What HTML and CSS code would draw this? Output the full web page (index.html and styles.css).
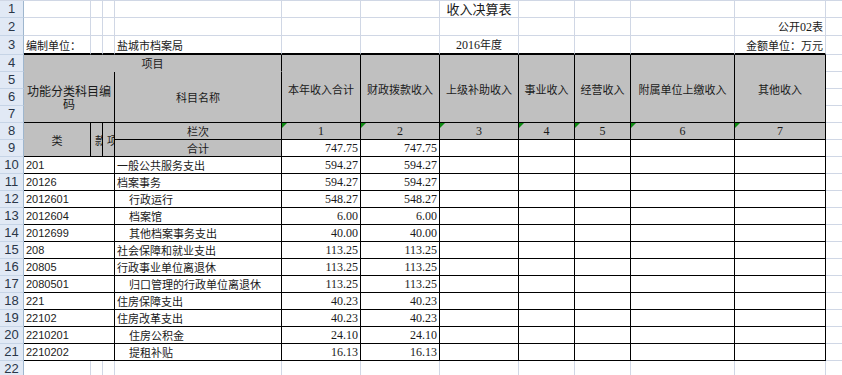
FILE: index.html
```html
<!DOCTYPE html>
<html lang="zh-CN">
<head>
<meta charset="utf-8">
<title>收入决算表</title>
<link rel="stylesheet" href="styles.css">
</head>
<body>
<table class="sheet">
  <colgroup>
    <col class="c-rh"><col class="c-a"><col class="c-b"><col class="c-c"><col class="c-d">
    <col class="c-e"><col class="c-f"><col class="c-g"><col class="c-h"><col class="c-i">
    <col class="c-j"><col class="c-k"><col class="c-l">
  </colgroup>
  <tbody>
    <tr>
      <th class="rh">1</th>
      <td></td><td></td><td></td><td></td><td></td><td></td>
      <td class="title">收入决算表</td>
      <td></td><td></td><td></td><td></td><td></td>
    </tr>
    <tr>
      <th class="rh">2</th>
      <td></td><td></td><td></td><td></td><td></td><td></td><td></td><td></td><td></td><td></td>
      <td class="right">公开<span class="dg">02</span>表</td>
      <td></td>
    </tr>
    <tr class="r3">
      <th class="rh">3</th>
      <td class="thick">编制单位：</td>
      <td class="thick"></td><td class="thick"></td>
      <td class="thick">盐城市档案局</td>
      <td class="thick"></td><td class="thick"></td>
      <td class="thick center"><span class="dg">2016</span>年度</td>
      <td class="thick"></td><td class="thick"></td><td class="thick"></td>
      <td class="thick right">金额单位：万元</td>
      <td></td>
    </tr>
    <tr>
      <th class="rh">4</th>
      <td class="hd xm" colspan="4">项目</td>
      <td class="hd" rowspan="4">本年收入合计</td>
      <td class="hd" rowspan="4">财政拨款收入</td>
      <td class="hd" rowspan="4">上级补助收入</td>
      <td class="hd" rowspan="4">事业收入</td>
      <td class="hd" rowspan="4">经营收入</td>
      <td class="hd" rowspan="4">附属单位上缴收入</td>
      <td class="hd" rowspan="4">其他收入</td>
      <td></td>
    </tr>
    <tr>
      <th class="rh">5</th>
      <td class="hd wrap" colspan="3" rowspan="3">功能分类科目编码</td>
      <td class="hd" rowspan="3">科目名称</td>
      <td></td>
    </tr>
    <tr><th class="rh">6</th><td></td></tr>
    <tr><th class="rh">7</th><td></td></tr>
    <tr>
      <th class="rh">8</th>
      <td class="hd" rowspan="2">类</td>
      <td class="hd clip" rowspan="2">款</td>
      <td class="hd clip" rowspan="2">项</td>
      <td class="hd">栏次</td>
      <td class="hd tri dg">1</td>
      <td class="hd tri dg">2</td>
      <td class="hd tri dg">3</td>
      <td class="hd tri dg">4</td>
      <td class="hd tri dg">5</td>
      <td class="hd tri dg">6</td>
      <td class="hd tri dg">7</td>
      <td></td>
    </tr>
    <tr>
      <th class="rh">9</th>
      <td class="hd">合计</td>
      <td class="b num">747.75</td><td class="b num">747.75</td>
      <td class="b"></td><td class="b"></td><td class="b"></td><td class="b"></td><td class="b"></td>
      <td></td>
    </tr>
    <tr>
      <th class="rh">10</th>
      <td class="b code" colspan="3">201</td><td class="b">一般公共服务支出</td>
      <td class="b num">594.27</td><td class="b num">594.27</td>
      <td class="b"></td><td class="b"></td><td class="b"></td><td class="b"></td><td class="b"></td><td></td>
    </tr>
    <tr>
      <th class="rh">11</th>
      <td class="b code" colspan="3">20126</td><td class="b">档案事务</td>
      <td class="b num">594.27</td><td class="b num">594.27</td>
      <td class="b"></td><td class="b"></td><td class="b"></td><td class="b"></td><td class="b"></td><td></td>
    </tr>
    <tr>
      <th class="rh">12</th>
      <td class="b code" colspan="3">2012601</td><td class="b ind">行政运行</td>
      <td class="b num">548.27</td><td class="b num">548.27</td>
      <td class="b"></td><td class="b"></td><td class="b"></td><td class="b"></td><td class="b"></td><td></td>
    </tr>
    <tr>
      <th class="rh">13</th>
      <td class="b code" colspan="3">2012604</td><td class="b ind">档案馆</td>
      <td class="b num">6.00</td><td class="b num">6.00</td>
      <td class="b"></td><td class="b"></td><td class="b"></td><td class="b"></td><td class="b"></td><td></td>
    </tr>
    <tr>
      <th class="rh">14</th>
      <td class="b code" colspan="3">2012699</td><td class="b ind">其他档案事务支出</td>
      <td class="b num">40.00</td><td class="b num">40.00</td>
      <td class="b"></td><td class="b"></td><td class="b"></td><td class="b"></td><td class="b"></td><td></td>
    </tr>
    <tr>
      <th class="rh">15</th>
      <td class="b code" colspan="3">208</td><td class="b">社会保障和就业支出</td>
      <td class="b num">113.25</td><td class="b num">113.25</td>
      <td class="b"></td><td class="b"></td><td class="b"></td><td class="b"></td><td class="b"></td><td></td>
    </tr>
    <tr>
      <th class="rh">16</th>
      <td class="b code" colspan="3">20805</td><td class="b">行政事业单位离退休</td>
      <td class="b num">113.25</td><td class="b num">113.25</td>
      <td class="b"></td><td class="b"></td><td class="b"></td><td class="b"></td><td class="b"></td><td></td>
    </tr>
    <tr>
      <th class="rh">17</th>
      <td class="b code" colspan="3">2080501</td><td class="b ind">归口管理的行政单位离退休</td>
      <td class="b num">113.25</td><td class="b num">113.25</td>
      <td class="b"></td><td class="b"></td><td class="b"></td><td class="b"></td><td class="b"></td><td></td>
    </tr>
    <tr>
      <th class="rh">18</th>
      <td class="b code" colspan="3">221</td><td class="b">住房保障支出</td>
      <td class="b num">40.23</td><td class="b num">40.23</td>
      <td class="b"></td><td class="b"></td><td class="b"></td><td class="b"></td><td class="b"></td><td></td>
    </tr>
    <tr>
      <th class="rh">19</th>
      <td class="b code" colspan="3">22102</td><td class="b">住房改革支出</td>
      <td class="b num">40.23</td><td class="b num">40.23</td>
      <td class="b"></td><td class="b"></td><td class="b"></td><td class="b"></td><td class="b"></td><td></td>
    </tr>
    <tr>
      <th class="rh">20</th>
      <td class="b code" colspan="3">2210201</td><td class="b ind">住房公积金</td>
      <td class="b num">24.10</td><td class="b num">24.10</td>
      <td class="b"></td><td class="b"></td><td class="b"></td><td class="b"></td><td class="b"></td><td></td>
    </tr>
    <tr>
      <th class="rh">21</th>
      <td class="b code" colspan="3">2210202</td><td class="b ind">提租补贴</td>
      <td class="b num">16.13</td><td class="b num">16.13</td>
      <td class="b"></td><td class="b"></td><td class="b"></td><td class="b"></td><td class="b"></td><td></td>
    </tr>
    <tr>
      <th class="rh">22</th>
      <td></td><td></td><td></td><td></td><td></td><td></td><td></td><td></td><td></td><td></td><td></td><td></td>
    </tr>
  </tbody>
</table>
</body>
</html>
```

FILE: styles.css
```css
html, body {
  margin: 0;
  padding: 0;
  overflow: hidden;
  background: #ffffff;
}

.sheet {
  border-collapse: separate;
  border-spacing: 0;
  table-layout: fixed;
  width: 906px;
  border-top: 1px solid #d0d7e5;
  font-family: "Noto Sans CJK SC", "Liberation Sans", sans-serif;
  font-size: 11px;
  color: #1a1a1a;
}

.c-rh { width: 24px; }
.c-a { width: 67px; }
.c-b { width: 12px; }
.c-c { width: 12px; }
.c-d { width: 167px; }
.c-e { width: 79px; }
.c-f { width: 79px; }
.c-g { width: 79px; }
.c-h { width: 56px; }
.c-i { width: 56px; }
.c-j { width: 104px; }
.c-k { width: 91px; }
.c-l { width: 80px; }

.sheet tr { height: 17px; }
.sheet tr.r3 { height: 18px; }

.sheet td {
  padding: 0 2px;
  line-height: 16px;
  white-space: nowrap;
  overflow: hidden;
  vertical-align: middle;
  border-right: 1px solid #d0d7e5;
  border-bottom: 1px solid #d0d7e5;
}

.rh {
  padding: 0;
  background: #e1e9f5;
  border-right: 1px solid #9eb6ce;
  border-bottom: 1px solid #c6d4e6;
  font-family: "Liberation Sans", Arial, sans-serif;
  font-size: 13px;
  font-weight: normal;
  line-height: 16px;
  color: #2a3648;
  text-align: center;
  vertical-align: middle;
}

.sheet td.title {
  text-align: center;
  font-size: 13px;
  line-height: 16px;
  overflow: visible;
  vertical-align: bottom;
}

.right { text-align: right; }
.center { text-align: center; }

.sheet td.thick { border-bottom: 2px solid #000; }

.dg {
  font-family: "Liberation Serif", "Noto Sans CJK SC", serif;
  font-size: 12px;
}

.sheet td.hd {
  background: #c0c0c0;
  text-align: center;
  border-right-color: #000;
  border-bottom-color: #000;
}

.sheet td.xm {
  border-bottom-color: #c0c0c0;
  background: linear-gradient(#000, #000) right bottom / 167px 1px no-repeat, #c0c0c0;
  background-origin: border-box;
  background-position: right 1px bottom 0;
}

.sheet td.wrap {
  white-space: normal;
  font-size: 12px;
  line-height: 13px;
  padding: 0 3px;
}

.sheet td.clip {
  padding: 0 0 0 4px;
  text-align: left;
}

.tri { position: relative; }
.tri::before {
  content: "";
  position: absolute;
  left: 0;
  top: 0;
  border-top: 5px solid #0d8a12;
  border-right: 5px solid transparent;
}

.sheet td.b {
  border-right-color: #000;
  border-bottom-color: #000;
}

.num {
  font-family: "Liberation Serif", serif;
  font-size: 12px;
  text-align: right;
}

.code {
  font-family: "Liberation Sans", Arial, sans-serif;
  font-size: 11px;
}

.sheet td.ind { padding-left: 14px; }
```
